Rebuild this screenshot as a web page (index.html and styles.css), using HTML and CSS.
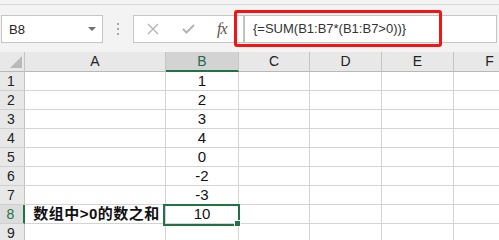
FILE: index.html
```html
<!DOCTYPE html>
<html>
<head>
<meta charset="utf-8">
<title>数组中>0的数之和</title>
<link rel="stylesheet" href="styles.css">
</head>
<body>
<div class="app">
	<div class="topline"></div>
	<div class="fbar">
		<div class="namebox">
			<span class="ref">B8</span>
			<span class="drop"></span>
		</div>
		<div class="dots"><i></i><i></i><i></i></div>
		<div class="fbtns">
			<svg class="ico" width="12" height="12" viewBox="0 0 12 12"><path d="M1 1L11 11M11 1L1 11" stroke="#b4b4b4" stroke-width="1.4" fill="none"/></svg>
			<svg class="ico" width="13" height="10" viewBox="0 0 13 10"><path d="M1 5L4.5 8.5L12 1" stroke="#b4b4b4" stroke-width="2" fill="none"/></svg>
			<span class="fx">fx</span>
		</div>
		<div class="formula">{=SUM(B1:B7*(B1:B7&gt;0))}</div>
		<div class="mark"></div>
	</div>
	<div class="view">
	<div class="sheet">
		<div class="corner"><svg width="12" height="12" viewBox="0 0 12 12"><polygon points="12,0 12,12 0,12" fill="#b9b9b9"/></svg></div>
		<div class="hd">A</div>
		<div class="hd sel">B</div>
		<div class="hd">C</div>
		<div class="hd">D</div>
		<div class="hd">E</div>
		<div class="hd">F</div>

		<div class="rh">1</div><div class="c"></div><div class="c num">1</div><div class="c"></div><div class="c"></div><div class="c"></div><div class="c"></div>
		<div class="rh">2</div><div class="c"></div><div class="c num">2</div><div class="c"></div><div class="c"></div><div class="c"></div><div class="c"></div>
		<div class="rh">3</div><div class="c"></div><div class="c num">3</div><div class="c"></div><div class="c"></div><div class="c"></div><div class="c"></div>
		<div class="rh">4</div><div class="c"></div><div class="c num">4</div><div class="c"></div><div class="c"></div><div class="c"></div><div class="c"></div>
		<div class="rh">5</div><div class="c"></div><div class="c num">0</div><div class="c"></div><div class="c"></div><div class="c"></div><div class="c"></div>
		<div class="rh">6</div><div class="c"></div><div class="c num">-2</div><div class="c"></div><div class="c"></div><div class="c"></div><div class="c"></div>
		<div class="rh">7</div><div class="c"></div><div class="c num">-3</div><div class="c"></div><div class="c"></div><div class="c"></div><div class="c"></div>
		<div class="rh sel">8</div><div class="c label">数组中&gt;0的数之和</div><div class="c num active">10</div><div class="c"></div><div class="c"></div><div class="c"></div><div class="c"></div>
		<div class="rh">9</div><div class="c"></div><div class="c"></div><div class="c"></div><div class="c"></div><div class="c"></div><div class="c"></div>
	</div>
	</div>
</div>
</body>
</html>
```

FILE: styles.css
```css
*{ margin:0; padding:0; box-sizing:border-box;}
body{ width:499px; height:240px; overflow:hidden; background:#fff; font-family:"Liberation Sans", "Noto Sans CJK SC", sans-serif; color:#222;}
.app{ background:#f3f3f3;}
.topline{ height:5px; border-bottom:1px solid #d8d8d8;}

.fbar{ display:flex; height:28px; margin:10px 0 9px 0; position:relative;}
.namebox{ width:102px; margin-left:1px; background:#fff; border:1px solid #c6c6c6; display:flex; align-items:center; justify-content:space-between; padding:0 6px 0 7px;}
.namebox .ref{ font-size:13px; color:#222;}
.namebox .drop{ width:0; height:0; border-left:4px solid transparent; border-right:4px solid transparent; border-top:4px solid #707070;}
.dots{ width:30px; display:flex; flex-direction:column; align-items:center; justify-content:center; gap:3px;}
.dots i{ display:block; width:2px; height:2px; background:#a8a8a8;}
.fbtns{ width:111px; background:#fff; border:1px solid #c6c6c6; display:flex; align-items:center; padding-left:13px;}
.fbtns .ico{ display:block;}
.fbtns .ico + .ico{ margin-left:23px;}
.fbtns .fx{ margin-left:22px; font-family:"Liberation Serif", serif; font-style:italic; font-size:16px; color:#555; letter-spacing:-1px;}
.formula{ width:253px; background:#fff; border:1px solid #c6c6c6; border-left-color:#bdbdbd; padding-left:8px; font-size:13px; line-height:26px; color:#333;}
.mark{ position:absolute; left:234px; top:-5px; width:208px; height:37px; border:3px solid #f41414; border-radius:3px;}

.view{ width:499px; overflow:hidden;}
.sheet{ display:grid; width:526px; grid-template-columns:25px 141px 73px 71px 72px 72px 72px; grid-template-rows:20px; grid-auto-rows:19px; background:#fff;}
.corner{ background:#e8e8e8; border-right:1px solid #c4c4c4; border-bottom:1px solid #b8b8b8; display:flex; align-items:flex-end; justify-content:flex-end; padding:0 2px 3px 0;}
.corner svg{ display:block;}
.hd{ background:#e8e8e8; border-right:1px solid #c4c4c4; border-bottom:1px solid #b8b8b8; font-size:14px; text-align:center; line-height:19px; color:#222;}
.hd.sel{ background:#d3d3d3; color:#1e6b45; border-bottom:2px solid #217346;}
.rh{ background:#e8e8e8; border-right:1px solid #c4c4c4; border-bottom:1px solid #d0d0d0; font-size:14px; text-align:center; line-height:18px; color:#222; padding-right:2px;}
.rh.sel{ background:#dcdcdc; color:#217346; border-right:2px solid #217346;}
.c{ border-right:1px solid #d4d4d4; border-bottom:1px solid #d4d4d4; font-size:15px; line-height:18px;}
.num{ text-align:center; color:#111;}
.label{ text-align:center; white-space:nowrap; font-weight:bold; font-size:15px; letter-spacing:0.5px; color:#111; padding-left:3px;}
.active{ position:relative;}
.active::after{ content:""; position:absolute; left:-3px; top:-1px; right:-2px; bottom:-3px; border:2px solid #217346;}
.active::before{ content:""; position:absolute; right:-3px; bottom:-4px; width:5px; height:5px; background:#217346; border:1px solid #fff; z-index:1;}
```
